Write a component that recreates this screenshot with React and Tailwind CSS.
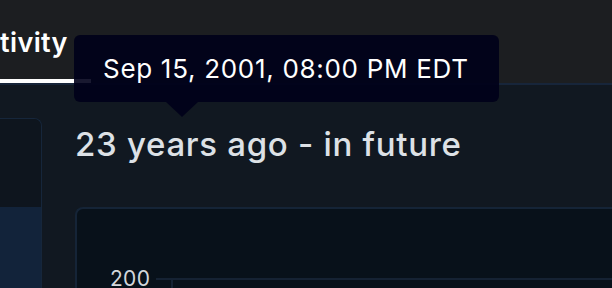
import React from "react";

export default function App() {
  return (
    <div
      className="relative w-[612px] h-[288px] overflow-hidden bg-[#111821]"
      style={{ fontFamily: "Inter, 'Noto Sans', sans-serif" }}
    >
      {/* header */}
      <div className="h-[85px] bg-[#1c1e21] border-b-2 border-[#17253a] flex items-end">
        <div className="relative w-[91px] pb-[27px] h-full flex items-end">
          <span className="text-[27px] leading-none font-semibold text-white tracking-[0.4px] whitespace-nowrap">
            tivity
          </span>
          <div className="absolute left-0 right-0 bottom-0 h-[4px] bg-white" />
        </div>
      </div>

      {/* body */}
      <div className="flex h-[203px]">
        <div className="w-[42px] mt-[33px] flex flex-col rounded-tr-lg border border-l-0 border-b-0 border-[#16263b] overflow-hidden">
          <div className="h-[88px] bg-[#0e151e]" />
          <div className="flex-1 bg-[#12233a]" />
        </div>
        <div className="ml-[33px] flex-1 flex flex-col pt-[43px]">
          <div className="text-[33px] leading-[33px] font-medium text-[#dde1e6] whitespace-nowrap tracking-[0.7px]">
            23 years ago - in future
          </div>
          <div className="mt-[46px] flex-1 rounded-tl-lg border-2 border-r-0 border-b-0 border-[#152437] bg-[#08111a] relative">
            <div className="flex items-start pt-[59px] pl-[33px]">
              <span className="text-[21px] leading-none text-[#d3d7dc] tracking-[0.3px]">200</span>
              <div className="flex-1 ml-[6px] mt-[10px] flex flex-col">
                <div className="h-[2px] bg-[#152233]" />
                <div className="ml-[15px] w-[2px] h-[20px] bg-[#152233]" />
              </div>
            </div>
          </div>
        </div>
      </div>

      {/* tooltip */}
      <div className="absolute left-[74px] top-[35px] flex flex-col items-start">
        <div className="w-[425px] h-[67px] rounded-md bg-[rgba(0,0,25,0.9)] flex items-center pl-[29px]">
          <span className="text-[26px] leading-none text-white whitespace-nowrap tracking-[0.7px]">
            Sep 15, 2001, 08:00 PM EDT
          </span>
        </div>
        <div className="ml-[92px] w-0 h-0 border-l-[16px] border-r-[16px] border-t-[15px] border-l-transparent border-r-transparent border-t-[rgba(0,0,25,0.9)]" />
      </div>
    </div>
  );
}
